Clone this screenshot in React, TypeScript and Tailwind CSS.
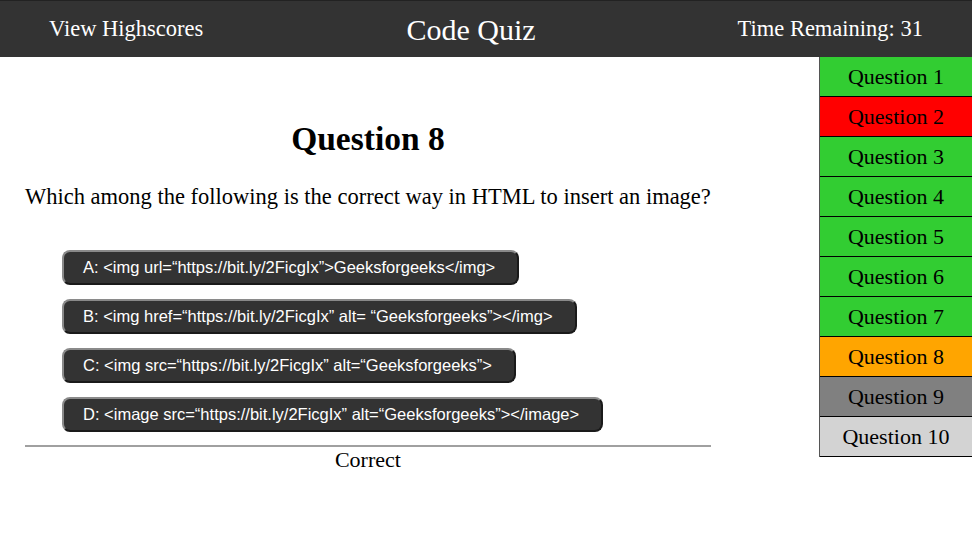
import React from "react";

const serif = { fontFamily: '"Liberation Serif", "Times New Roman", serif' };
const sans = { fontFamily: '"Liberation Sans", Arial, sans-serif' };

const questions: { label: string; bg: string }[] = [
  { label: "Question 1", bg: "bg-[#32cd32]" },
  { label: "Question 2", bg: "bg-[#ff0000]" },
  { label: "Question 3", bg: "bg-[#32cd32]" },
  { label: "Question 4", bg: "bg-[#32cd32]" },
  { label: "Question 5", bg: "bg-[#32cd32]" },
  { label: "Question 6", bg: "bg-[#32cd32]" },
  { label: "Question 7", bg: "bg-[#32cd32]" },
  { label: "Question 8", bg: "bg-[#ffa500]" },
  { label: "Question 9", bg: "bg-[#808080]" },
  { label: "Question 10", bg: "bg-[#d3d3d3]" },
];

const answers = [
  "A: <img url=“https://bit.ly/2FicgIx”>Geeksforgeeks</img>",
  "B: <img href=“https://bit.ly/2FicgIx” alt= “Geeksforgeeks”></img>",
  "C: <img src=“https://bit.ly/2FicgIx” alt=“Geeksforgeeks”>",
  "D: <image src=“https://bit.ly/2FicgIx” alt=“Geeksforgeeks”></image>",
];

export default function App() {
  return (
    <div className="w-[972px] h-[551px] bg-white overflow-hidden" style={serif}>
      <header className="h-[57px] bg-[#333333] border-t border-[#222] flex items-center text-white">
        <div className="w-[285px] pl-[49px] text-[22.5px]">View Highscores</div>
        <div className="flex-1 text-center text-[30px]">Code Quiz</div>
        <div className="w-[315px] pr-[49px] text-right text-[22.5px]">Time Remaining: 31</div>
      </header>
      <div className="flex items-start">
        <main className="flex-1 pl-[25px] pr-[108px]">
          <h1 className="text-[33.5px] font-bold text-center mt-[63px] leading-[38px]">Question 8</h1>
          <p className="text-[22.5px] mt-[26px] leading-[26px] whitespace-nowrap">
            Which among the following is the correct way in HTML to insert an image?
          </p>
          <div className="flex flex-col items-start gap-[14px] mt-[40px] pl-[37px]">
            {answers.map((a) => (
              <button
                key={a}
                className="h-[35px] pl-[19px] pr-[22px] rounded-[8px] bg-[#333333] text-white text-[16.5px] border-2 border-t-[#8a8a8a] border-l-[#8a8a8a] border-b-[#1a1a1a] border-r-[#1a1a1a] text-left"
                style={sans}
              >
                {a}
              </button>
            ))}
          </div>
          <hr className="mt-[13px] border-t-2 border-[#a0a0a0]" />
          <div className="text-center text-[22px] leading-[26px]">Correct</div>
        </main>
        <aside className="w-[154px] border-l border-[#555]">
          {questions.map((q) => (
            <div
              key={q.label}
              className={`${q.bg} h-[40px] border-b border-black flex items-center justify-center text-[22px] text-black`}
            >
              {q.label}
            </div>
          ))}
        </aside>
      </div>
    </div>
  );
}
